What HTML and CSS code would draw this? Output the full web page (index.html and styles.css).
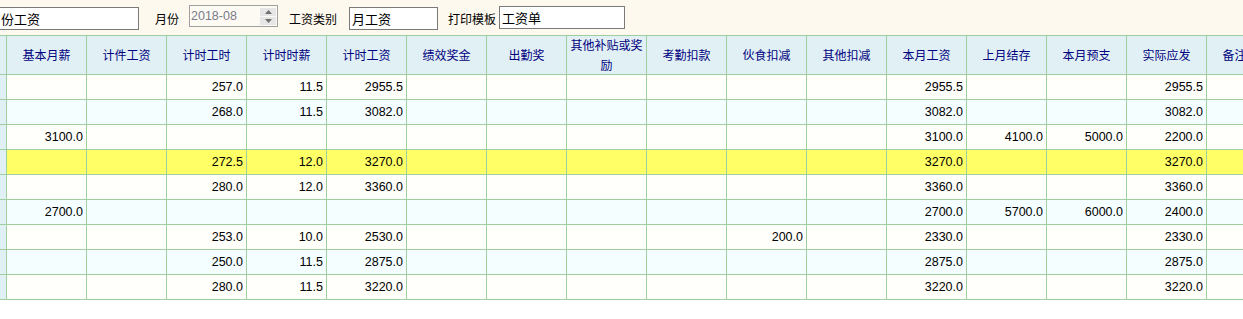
FILE: index.html
```html
<!DOCTYPE html>
<html lang="zh">
<head>
<meta charset="utf-8">
<title>工资</title>
<link rel="stylesheet" href="styles.css">
</head>
<body>
<div class="toolbar">
  <div class="field f-name">份工资</div>
  <span class="label l-month">月份</span>
  <div class="numbox">
    <span class="numtext">2018-08</span>
    <span class="spin">
      <span class="spin-btn"><svg width="7" height="4" viewBox="0 0 7 4"><path d="M0 4 L3.5 0 L7 4 Z" fill="#707070"/></svg></span>
      <span class="spin-btn"><svg width="7" height="4" viewBox="0 0 7 4"><path d="M0 0 L3.5 4 L7 0 Z" fill="#707070"/></svg></span>
    </span>
  </div>
  <span class="label l-type">工资类别</span>
  <div class="field f-type">月工资</div>
  <span class="label l-tpl">打印模板</span>
  <div class="field f-tpl">工资单</div>
</div>

<div class="grid-wrap">
  <div class="row head">
    <div class="cell rh"></div>
    <div class="cell">基本月薪</div>
    <div class="cell">计件工资</div>
    <div class="cell">计时工时</div>
    <div class="cell">计时时薪</div>
    <div class="cell">计时工资</div>
    <div class="cell">绩效奖金</div>
    <div class="cell">出勤奖</div>
    <div class="cell">其他补贴或奖励</div>
    <div class="cell">考勤扣款</div>
    <div class="cell">伙食扣减</div>
    <div class="cell">其他扣减</div>
    <div class="cell">本月工资</div>
    <div class="cell">上月结存</div>
    <div class="cell">本月预支</div>
    <div class="cell">实际应发</div>
    <div class="cell last">备注</div>
  </div>

  <div class="row odd">
    <div class="cell rh"></div><div class="cell"></div><div class="cell"></div><div class="cell">257.0</div><div class="cell">11.5</div><div class="cell">2955.5</div><div class="cell"></div><div class="cell"></div><div class="cell"></div><div class="cell"></div><div class="cell"></div><div class="cell"></div><div class="cell">2955.5</div><div class="cell"></div><div class="cell"></div><div class="cell">2955.5</div><div class="cell last"></div>
  </div>
  <div class="row even">
    <div class="cell rh"></div><div class="cell"></div><div class="cell"></div><div class="cell">268.0</div><div class="cell">11.5</div><div class="cell">3082.0</div><div class="cell"></div><div class="cell"></div><div class="cell"></div><div class="cell"></div><div class="cell"></div><div class="cell"></div><div class="cell">3082.0</div><div class="cell"></div><div class="cell"></div><div class="cell">3082.0</div><div class="cell last"></div>
  </div>
  <div class="row odd">
    <div class="cell rh"></div><div class="cell">3100.0</div><div class="cell"></div><div class="cell"></div><div class="cell"></div><div class="cell"></div><div class="cell"></div><div class="cell"></div><div class="cell"></div><div class="cell"></div><div class="cell"></div><div class="cell"></div><div class="cell">3100.0</div><div class="cell">4100.0</div><div class="cell">5000.0</div><div class="cell">2200.0</div><div class="cell last"></div>
  </div>
  <div class="row selected">
    <div class="cell rh"></div><div class="cell"></div><div class="cell"></div><div class="cell">272.5</div><div class="cell">12.0</div><div class="cell">3270.0</div><div class="cell"></div><div class="cell"></div><div class="cell"></div><div class="cell"></div><div class="cell"></div><div class="cell"></div><div class="cell">3270.0</div><div class="cell"></div><div class="cell"></div><div class="cell">3270.0</div><div class="cell last"></div>
  </div>
  <div class="row odd">
    <div class="cell rh"></div><div class="cell"></div><div class="cell"></div><div class="cell">280.0</div><div class="cell">12.0</div><div class="cell">3360.0</div><div class="cell"></div><div class="cell"></div><div class="cell"></div><div class="cell"></div><div class="cell"></div><div class="cell"></div><div class="cell">3360.0</div><div class="cell"></div><div class="cell"></div><div class="cell">3360.0</div><div class="cell last"></div>
  </div>
  <div class="row even">
    <div class="cell rh"></div><div class="cell">2700.0</div><div class="cell"></div><div class="cell"></div><div class="cell"></div><div class="cell"></div><div class="cell"></div><div class="cell"></div><div class="cell"></div><div class="cell"></div><div class="cell"></div><div class="cell"></div><div class="cell">2700.0</div><div class="cell">5700.0</div><div class="cell">6000.0</div><div class="cell">2400.0</div><div class="cell last"></div>
  </div>
  <div class="row odd">
    <div class="cell rh"></div><div class="cell"></div><div class="cell"></div><div class="cell">253.0</div><div class="cell">10.0</div><div class="cell">2530.0</div><div class="cell"></div><div class="cell"></div><div class="cell"></div><div class="cell"></div><div class="cell">200.0</div><div class="cell"></div><div class="cell">2330.0</div><div class="cell"></div><div class="cell"></div><div class="cell">2330.0</div><div class="cell last"></div>
  </div>
  <div class="row even">
    <div class="cell rh"></div><div class="cell"></div><div class="cell"></div><div class="cell">250.0</div><div class="cell">11.5</div><div class="cell">2875.0</div><div class="cell"></div><div class="cell"></div><div class="cell"></div><div class="cell"></div><div class="cell"></div><div class="cell"></div><div class="cell">2875.0</div><div class="cell"></div><div class="cell"></div><div class="cell">2875.0</div><div class="cell last"></div>
  </div>
  <div class="row odd">
    <div class="cell rh"></div><div class="cell"></div><div class="cell"></div><div class="cell">280.0</div><div class="cell">11.5</div><div class="cell">3220.0</div><div class="cell"></div><div class="cell"></div><div class="cell"></div><div class="cell"></div><div class="cell"></div><div class="cell"></div><div class="cell">3220.0</div><div class="cell"></div><div class="cell"></div><div class="cell">3220.0</div><div class="cell last"></div>
  </div>
</div>
</body>
</html>
```

FILE: styles.css
```css
html, body {
  margin: 0;
  padding: 0;
  background: #ffffff;
  overflow: hidden;
}

body {
  font-family: "Liberation Sans", "Noto Sans CJK SC", sans-serif;
  font-size: 12px;
  color: #000;
}

/* ---------- toolbar ---------- */
.toolbar {
  height: 35px;
  background: #fef9ee;
  display: flex;
  align-items: flex-start;
  box-sizing: border-box;
}

.field {
  box-sizing: border-box;
  height: 23px;
  border: 1px solid #7a7a7a;
  background: #ffffff;
  font-family: "Noto Sans CJK SC", sans-serif;
  font-size: 13px;
  line-height: 21px;
  padding-left: 2px;
  white-space: nowrap;
  overflow: hidden;
}

.f-name {
  width: 140px;
  margin-top: 7px;
  margin-left: -1px;
  border-left: none;
  padding-left: 2px;
}

.f-type {
  width: 89px;
  margin-top: 7px;
  margin-left: 12px;
}

.f-tpl {
  width: 126px;
  margin-top: 6px;
  margin-left: 3px;
}

.label {
  font-family: "Noto Sans CJK SC", sans-serif;
  font-size: 12px;
  line-height: 16px;
  margin-top: 11px;
  white-space: nowrap;
}

.l-month { margin-left: 16px; }
.l-type { margin-left: 11px; }
.l-tpl { margin-left: 10px; }

.numbox {
  box-sizing: border-box;
  width: 89px;
  height: 22px;
  margin-top: 5px;
  margin-left: 10px;
  border: 1px solid #a0a0a0;
  background: #fdfaf3;
  display: flex;
  align-items: center;
  justify-content: space-between;
}

.numtext {
  font-family: "Liberation Sans", sans-serif;
  font-size: 12.5px;
  color: #7a7a8c;
  padding-left: 1px;
}

.spin {
  display: flex;
  flex-direction: column;
  gap: 1px;
  margin-right: 1px;
}

.spin-btn {
  width: 16px;
  height: 8px;
  background: #e6e6e6;
  display: flex;
  align-items: center;
  justify-content: center;
}

/* ---------- grid ---------- */
.grid-wrap {
  width: 100%;
  overflow: hidden;
}

.row {
  display: flex;
  width: max-content;
  background: #fffffb;
}

.row.even { background: #f4fdff; }
.row.selected { background: #ffff66; }

.cell {
  box-sizing: border-box;
  flex: 0 0 80px;
  width: 80px;
  height: 25px;
  border-right: 1px solid #9fcf9f;
  border-bottom: 1px solid #9fcf9f;
  text-align: right;
  padding-right: 3px;
  font-family: "Liberation Sans", sans-serif;
  font-size: 12.5px;
  line-height: 24px;
  white-space: nowrap;
  overflow: hidden;
}

.cell.last {
  flex: 0 0 56px;
  width: 56px;
}

.cell.rh {
  flex: 0 0 7px;
  width: 7px;
  padding: 0;
  background: #e1f0f5;
}

.row.head {
  background: #e1f0f5;
}

.row.head .cell {
  height: 40px;
  border-top: 1px solid #9fcf9f;
  display: flex;
  align-items: center;
  justify-content: center;
  text-align: center;
  padding: 0 3px;
  overflow: visible;
  white-space: normal;
  font-family: "Noto Sans CJK SC", sans-serif;
  font-size: 12px;
  line-height: 20px;
  color: #000080;
}

.row.head .cell.last {
  white-space: nowrap;
  padding: 0;
}

.row.head .cell.rh {
  padding: 0;
}
```
